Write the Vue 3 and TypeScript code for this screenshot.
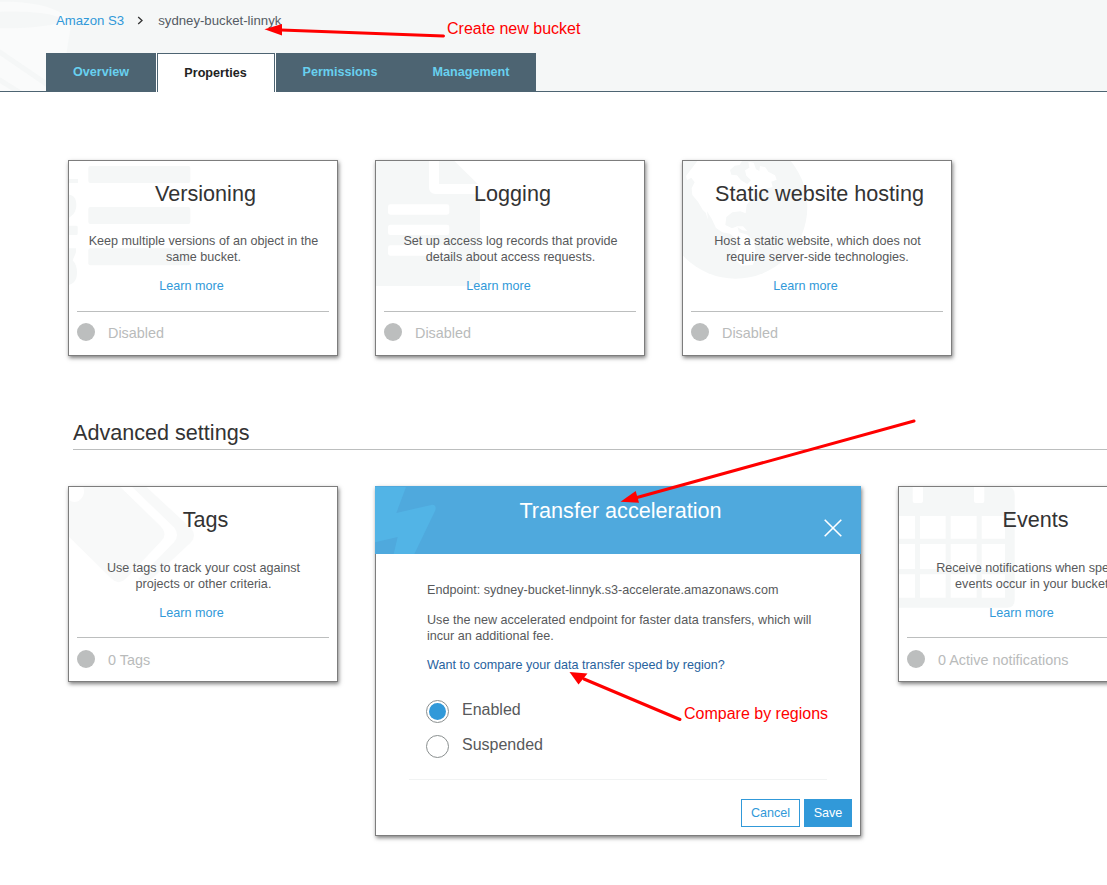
<script setup lang="ts">
interface Card {
  icon: string
  viewBox: string
  title: string
  lines: string[]
  status: string
}

const tabs: string[] = ['Overview', 'Properties', 'Permissions', 'Management']
const activeTab = 'Properties'

const basic: Card[] = [
  { icon: 'list', viewBox: '27 33 804 582', title: 'Versioning', lines: ['Keep multiple versions of an object in the', 'same bucket.'], status: 'Disabled' },
  { icon: 'doc', viewBox: '33 33 804 582', title: 'Logging', lines: ['Set up access log records that provide', 'details about access requests.'], status: 'Disabled' },
  { icon: 'globe', viewBox: '33 33 804 582', title: 'Static website hosting', lines: ['Host a static website, which does not', 'require server-side technologies.'], status: 'Disabled' },
]

const advanced: Card[] = [
  { icon: 'tags', viewBox: '27 231 804 582', title: 'Tags', lines: ['Use tags to track your cost against', 'projects or other criteria.'], status: '0 Tags' },
  { icon: 'calendar', viewBox: '36 33 804 582', title: 'Events', lines: ['Receive notifications when specific', 'events occur in your bucket.'], status: '0 Active notifications' },
]
</script>

<template>
  <div class="page">
    <header class="top">
      <svg class="bucket" width="80" height="91" viewBox="0 0 240 273">
        <path d="M0 5C100 3 212 25 212 82L200 155L184 273H0Z" fill="#fafbfb" />
        <path d="M0 35C90 32 182 42 182 60C182 76 90 86 0 85Z" fill="#f5f7f7" />
        <path d="M0 148L140 243V262L0 166ZM0 232L66 273H38L0 250Z" fill="#f5f7f7" />
      </svg>
      <nav class="crumbs">
        <a>Amazon S3</a>
        <svg width="7" height="9" viewBox="0 0 7 9"><path d="M1.2 1L5 4.5L1.2 8" fill="none" stroke="#333" stroke-width="1.3" /></svg>
        <span>sydney-bucket-linnyk</span>
      </nav>
      <nav class="tabs">
        <a v-for="t in tabs" :key="t" class="tab" :class="[t.toLowerCase(), { active: t === activeTab }]">{{ t }}</a>
      </nav>
    </header>

    <main>
      <section class="row">
        <article v-for="c in basic" :key="c.title" class="card">
          <svg class="art" width="268" height="194" :viewBox="c.viewBox">
            <g v-if="c.icon === 'list'" fill="#f5f7f7">
              <rect x="85" y="48" width="306" height="51" rx="6" />
              <rect x="85" y="171" width="306" height="51" rx="6" />
              <rect x="85" y="295" width="306" height="51" rx="6" />
              <path d="M27 87H54V99H27ZM27 134C42 135 49 147 49 164C49 183 41 194 27 203ZM27 227H49Q53 227 53 231V251Q53 255 49 255H27ZM27 295H48V307L38 331Q51 345 51 367C51 391 41 401 27 405Z" />
            </g>
            <g v-else-if="c.icon === 'doc'">
              <path d="M33 33H192V112Q192 132 212 132H345V408H33ZM222 33H268L338 102H222Z" fill="#f5f7f7" />
              <g fill="#fff">
                <rect x="69" y="163" width="184" height="31" rx="7" />
                <rect x="69" y="224" width="184" height="31" rx="7" />
                <rect x="69" y="286" width="184" height="31" rx="7" />
              </g>
            </g>
            <g v-else-if="c.icon === 'globe'">
              <circle cx="191" cy="171" r="215" fill="#f5f7f7" />
              <path d="M76 33L58 57L42 78L45 91L58 83L68 97L59 115L61 135L78 155L92 179L101 188L108 209L105 184L119 206L132 234L151 247L174 251L190 264L202 287L191 310L192 331L209 347L242 345L252 318L247 275L226 254L201 247L196 229L180 235L160 225L163 201L181 187L205 184L221 190L224 164L242 145L256 130L279 117L302 111L298 95L314 89L309 76L289 65L280 52L264 48L262 63L252 58L245 38L229 35L232 53L219 61L223 77L237 91L226 102L207 91L195 76L178 74L174 60L188 47L203 45L210 33Z" fill="#fff" />
              <path d="M193 229L213 229L226 243L211 241Z" fill="#fff" />
            </g>
          </svg>
          <h2>{{ c.title }}</h2>
          <p><template v-for="(l, i) in c.lines" :key="l"><br v-if="i">{{ l }}</template></p>
          <a class="learn">Learn more</a>
          <div class="status"><i></i><span>{{ c.status }}</span></div>
        </article>
      </section>

      <h3>Advanced settings</h3>

      <section class="row second">
        <article v-for="c in advanced" :key="c.title" class="card" :class="c.icon">
          <svg class="art" width="268" height="194" :viewBox="c.viewBox">
            <g v-if="c.icon === 'tags'" fill="#f8f9f9">
              <path d="M70 231H181L303 350Q324 375 303 394L197 506Q176 527 155 506L27 380V270C48 286 73 266 72 242Z" />
              <path d="M217 231H259L393 355Q411 376 393 397L275 507Q255 525 235 507L342 397Q360 375 342 352Z" />
            </g>
            <path v-else fill="#f5f7f7" fill-rule="evenodd" d="M36 33H77V75Q77 81 83 81H102Q108 81 108 75V33H261V75Q261 81 267 81H286Q292 81 292 75V33H366Q383 37 383 56V372Q383 395 360 395H36ZM36 120V188H84V120ZM99 120V188H176V120ZM191 120V188H269V120ZM284 120V188H354V120ZM36 204V279H84V204ZM99 204V279H176V204ZM191 204V279H269V204ZM284 204V279H354V204ZM36 295V365H84V295ZM99 295V365H176V295ZM191 295V365H269V295ZM284 295V365H354V295Z" />
          </svg>
          <h2>{{ c.title }}</h2>
          <p><template v-for="(l, i) in c.lines" :key="l"><br v-if="i">{{ l }}</template></p>
          <a class="learn">Learn more</a>
          <div class="status"><i></i><span>{{ c.status }}</span></div>
        </article>

        <article class="panel">
          <div class="panel-head">
            <svg class="bolt" width="62" height="68" viewBox="30 30 186 204">
              <path d="M30 33H123L94 111L202 86Q215 87 211 103L148 234H86L98 183L30 199Z" fill="#52b4e6" />
            </svg>
            <h2>Transfer acceleration</h2>
            <svg class="close" width="20" height="20" viewBox="0 0 20 20"><path d="M1.7 1.7L18.3 18.3M18.3 1.7L1.7 18.3" stroke="#fff" stroke-width="1.6" fill="none" /></svg>
          </div>
          <div class="panel-body">
            <p>Endpoint: sydney-bucket-linnyk.s3-accelerate.amazonaws.com</p>
            <p>Use the new accelerated endpoint for faster data transfers, which will<br>incur an additional fee.</p>
            <a class="compare">Want to compare your data transfer speed by region?</a>
            <label class="radio on"><i></i><span>Enabled</span></label>
            <label class="radio"><i></i><span>Suspended</span></label>
            <hr>
            <div class="actions">
              <button class="cancel">Cancel</button>
              <button class="save">Save</button>
            </div>
          </div>
        </article>
      </section>
    </main>

    <svg class="notes" width="1107" height="885" viewBox="0 0 1107 885">
      <g stroke="#f00" stroke-width="3" stroke-linecap="round">
        <path d="M281 30L443.500 36" />
        <path d="M637 497.500L914 421" />
        <path d="M584 679L680 719.500" />
      </g>
      <g fill="#f00">
        <path d="M264.500 29.300L282 24V35.500Z" />
        <path d="M620.500 501.700L635.700 491L639 502.700Z" />
        <path d="M569.500 672L587.500 673.500L578.500 684.500Z" />
        <text x="447" y="34">Create new bucket</text>
        <text x="684" y="719">Compare by regions</text>
      </g>
    </svg>
  </div>
</template>

<style>
body { margin: 0; background: #fff; }
</style>

<style scoped>
* { box-sizing: border-box; }
.page {
  position: relative;
  width: 1107px;
  height: 885px;
  overflow: hidden;
  background: #fff;
  font: 12.6px/16px "Liberation Sans", Arial, sans-serif;
  color: #58595b;
}
h2, h3, p { margin: 0; font-weight: normal; }
.top {
  position: relative;
  height: 92px;
  background: #f5f7f7;
  border-bottom: 1px solid #4d6472;
}
.bucket { position: absolute; left: 0; top: 0; }
.crumbs {
  position: relative;
  display: flex;
  align-items: center;
  height: 53px;
  padding: 0 0 12px 56px;
  font-size: 13.2px;
  color: #545b64;
}
.crumbs a { color: #3199d9; }
.crumbs svg { margin: 0 14px 0 13px; }
.tabs { position: relative; display: flex; margin-left: 46px; height: 39px; }
.tab {
  height: 38px;
  line-height: 38px;
  text-align: center;
  font-weight: bold;
  background: #4d6472;
  color: #68d0ef;
}
.overview { width: 110px; }
.permissions, .management { width: 130px; }
.permissions { padding-right: 2px; }
.tab.active {
  width: 118px;
  height: 39px;
  margin: 0 1px;
  padding-right: 1px;
  background: #fff;
  color: #222;
  border: 1px solid #4d6472;
  border-bottom: 0;
  box-shadow: -1px 0 #fff, 1px 0 #fff;
}
.row { display: flex; gap: 37px; width: 1200px; padding: 68px 0 0 68px; align-items: flex-start; }
.card {
  position: relative;
  flex: none;
  width: 270px;
  height: 196px;
  padding: 20px 8px 0;
  background: #fff;
  border: 1px solid #7d7d7d;
  box-shadow: 1px 2px 4px rgba(0, 0, 0, 0.5);
  text-align: center;
}
.art { position: absolute; left: 0; top: 0; }
.card h2, .card p, .learn { position: relative; }
h2 { font-size: 21.6px; line-height: 26px; color: #333; padding-left: 5px; }
.card h2 { white-space: nowrap; }
.card p { margin: 26px -8px 0; padding-left: 1px; }
.learn { display: block; margin-top: 13px; padding-right: 23px; color: #3199d9; }
.status {
  display: flex;
  align-items: flex-start;
  margin-top: 17px;
  padding-top: 11px;
  border-top: 1px solid #bcbebe;
  font-size: 14.4px;
  line-height: 20px;
  color: #b9bbbb;
}
.status i { width: 18px; height: 18px; margin-right: 13px; border-radius: 50%; background: #bcbebe; }
h3 {
  width: 1100px;
  height: 30px;
  margin: 64px 0 0 73px;
  font-size: 21.6px;
  line-height: 26px;
  color: #333;
  border-bottom: 1px solid #bcbebe;
}
.second { padding-top: 36px; }
.second .card p { margin-top: 27px; }
.second .learn { margin-bottom: -1px; }
.second .status { padding-top: 12px; }
.tags { order: 1; }
.panel { order: 2; }
.calendar { order: 3; }
.panel { flex: none; width: 486px; height: 350px; background: #fff; box-shadow: 1px 2px 4px rgba(0, 0, 0, 0.5); }
.panel-head { position: relative; height: 68px; padding-top: 12px; background: #4fa9dd; text-align: center; }
.panel-head h2 { position: relative; color: #fff; }
.bolt { position: absolute; left: 0; top: 0; }
.close { position: absolute; right: 18px; top: 32px; }
.panel-body {
  height: 282px;
  padding: 28px 8px 0 51px;
  border: 1px solid #7d7d7d;
  border-top: 0;
}
.panel-body p { margin-bottom: 14px; white-space: nowrap; }
.panel-body p + p { margin-bottom: 13px; }
.compare { display: block; margin-bottom: 27px; color: #28629e; }
.radio { display: flex; align-items: flex-start; height: 35px; margin-left: -1px; font-size: 16px; line-height: 19px; }
.radio i { width: 23px; height: 23px; margin-right: 13px; border: 1px solid #8a8f8f; border-radius: 50%; background: #fff; }
.radio.on i { padding: 2px; background: #3199d9 content-box; }
hr { height: 1px; margin: 9px 25px 0 -18px; border: 0; background: #f1f3f3; }
.actions { display: flex; justify-content: flex-end; gap: 4px; margin-top: 19px; }
button { height: 28px; padding: 0; border: 1px solid #3199d9; font: 12.6px/16px "Liberation Sans", Arial, sans-serif; }
.cancel { width: 59px; background: #fff; color: #3199d9; }
.save { width: 48px; background: #3199d9; color: #fff; }
.notes { position: absolute; left: 0; top: 0; pointer-events: none; font: 16px "Liberation Sans", Arial, sans-serif; }
</style>
